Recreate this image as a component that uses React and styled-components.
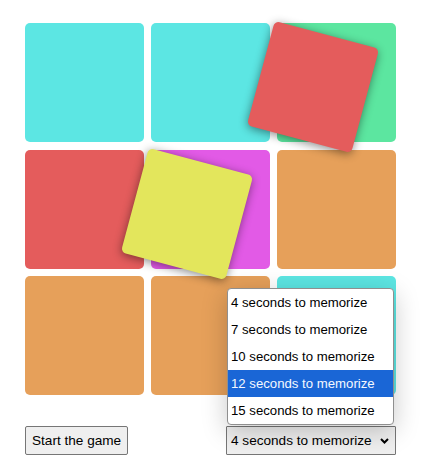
import React from "react";
import styled, { createGlobalStyle } from "styled-components";

const Global = createGlobalStyle`
  html, body { margin: 0; padding: 0; background: #ffffff; }
  body { font-family: "Liberation Sans", Arial, sans-serif; }
`;

const Page = styled.div`
  width: 421px;
  height: 469px;
  padding: 23px 25px 0;
  box-sizing: border-box;
  overflow: hidden;
`;

const Board = styled.div`
  display: grid;
  grid-template-columns: repeat(3, 119px);
  grid-auto-rows: 119px;
  column-gap: 7px;
  row-gap: 7.5px;
`;

const Tile = styled.div`
  position: relative;
  border-radius: 5px;
  background: ${(p) => p.$color};
`;

const FlyingCard = styled.div`
  position: absolute;
  left: -18px;
  top: 10px;
  width: 108px;
  height: 108px;
  border-radius: 5px;
  background: ${(p) => p.$color};
  transform: rotate(${(p) => p.$angle}deg);
  box-shadow: 0 2px 10px rgba(0, 0, 0, 0.45);
  z-index: 2;
`;

const Controls = styled.div`
  margin-top: 31px;
  width: 371px;
  display: flex;
  justify-content: space-between;
  align-items: center;
`;

const Button = styled.button`
  font-family: "Liberation Sans", Arial, sans-serif;
  font-size: 13.6px;
  line-height: 15px;
  color: #000;
  background: #efefef;
  border: 1px solid #767676;
  border-radius: 2px;
  padding: 6px 6px;
  height: 29px;
  box-sizing: border-box;
`;

const SelectWrap = styled.div`
  position: relative;
  width: 170px;
  height: 29px;
`;

const SelectBox = styled.div`
  box-sizing: border-box;
  width: 100%;
  height: 100%;
  display: flex;
  align-items: center;
  justify-content: space-between;
  padding: 0 6px 0 4px;
  font-size: 13.6px;
  color: #000;
  background: #efefef;
  border: 1px solid #767676;
  border-radius: 1px;
`;

const Chevron = styled.svg`
  width: 9px;
  height: 6px;
  margin-top: 1px;
`;

const List = styled.ul`
  position: absolute;
  left: 1px;
  right: 2px;
  bottom: calc(100% + 1px);
  margin: 0;
  padding: 0;
  list-style: none;
  background: #fff;
  border: 1px solid #8f8f8f;
  border-radius: 4px;
  overflow: hidden;
  box-shadow: 0 6px 26px rgba(0, 0, 0, 0.22);
  z-index: 5;
`;

const Option = styled.li`
  font-size: 13.2px;
  line-height: 15px;
  padding: 6px 3px;
  color: ${(p) => (p.$active ? "#f4f8ff" : "#000")};
  background: ${(p) => (p.$active ? "#1a66d6" : "transparent")};
  white-space: nowrap;
`;

const C = {
  cyan: "#5ce6e3",
  green: "#5ce6a0",
  red: "#e45c5c",
  magenta: "#e25ae6",
  orange: "#e6a05a",
  yellow: "#e3e65c",
};

const tiles = [
  { color: C.cyan },
  { color: C.cyan },
  { color: C.green, card: { color: C.red, angle: 15 } },
  { color: C.red },
  { color: C.magenta, card: { color: C.yellow, angle: 15 } },
  { color: C.orange },
  { color: C.orange },
  { color: C.orange },
  { color: C.cyan },
];

const options = [4, 7, 10, 12, 15];

export default function App() {
  return (
    <Page>
      <Global />
      <Board>
        {tiles.map((t, i) => (
          <Tile key={i} $color={t.color}>
            {t.card && <FlyingCard $color={t.card.color} $angle={t.card.angle} />}
          </Tile>
        ))}
      </Board>
      <Controls>
        <Button>Start the game</Button>
        <SelectWrap>
          <List>
            {options.map((s) => (
              <Option key={s} $active={s === 12}>
                {s} seconds to memorize
              </Option>
            ))}
          </List>
          <SelectBox>
            <span>4 seconds to memorize</span>
            <Chevron viewBox="0 0 9 6">
              <path d="M1 1 L4.5 4.5 L8 1" fill="none" stroke="#000" strokeWidth="2" />
            </Chevron>
          </SelectBox>
        </SelectWrap>
      </Controls>
    </Page>
  );
}
